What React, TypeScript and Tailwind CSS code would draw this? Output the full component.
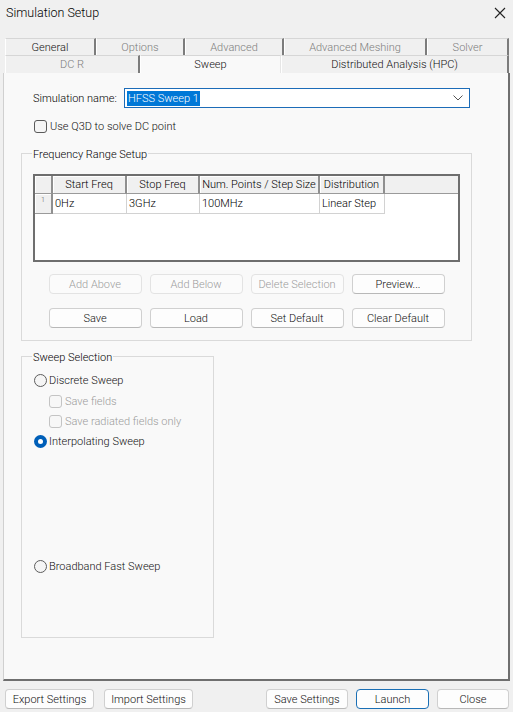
import React from "react";

type TabProps = { label: string; cls: string; disabled?: boolean; selected?: boolean };

function Tab({ label, cls, disabled, selected }: TabProps) {
  return (
    <div
      className={
        "flex items-center justify-center whitespace-nowrap pt-[1px] border-t border-l border-t-[#d6d6d6] border-l-[#ffffff] " +
        (selected
          ? "bg-[#f9f9f9] border-r border-r-[#e6e6e6] "
          : "bg-[#f0f0f0] border-r-2 border-r-[#7c7c7c] ") +
        (disabled ? "text-[#7d7d7d] " : "text-[#111111] ") +
        cls
      }
    >
      {label}
    </div>
  );
}

type BtnProps = { label: string; cls: string; disabled?: boolean; primary?: boolean };

function Btn({ label, cls, disabled, primary }: BtnProps) {
  return (
    <div
      className={
        "flex items-center justify-center whitespace-nowrap pt-[1px] rounded-[4px] border h-[20px] " +
        (disabled
          ? "bg-[#fbfbfb] border-[#e3e3e3] text-[#9b9b9b] "
          : primary
          ? "bg-[#fdfdfd] border-[#1a6fb5] text-[#111111] "
          : "bg-[#fdfdfd] border-[#d0d0d0] border-b-[#b8b8b8] text-[#111111] ") +
        cls
      }
    >
      {label}
    </div>
  );
}

function Check({ label, disabled }: { label: string; disabled?: boolean }) {
  return (
    <div className="flex items-center gap-[3px]">
      <div
        className={
          "w-[13px] h-[13px] rounded-[3px] border " +
          (disabled ? "border-[#c4c4c4] bg-[#f7f7f7]" : "border-[#5a5a5a] bg-[#f5f5f5]")
        }
      />
      <span className={"whitespace-nowrap pt-[1px] " + (disabled ? "text-[#9b9b9b]" : "text-[#111111]")}>{label}</span>
    </div>
  );
}

function Radio({ label, checked }: { label: string; checked?: boolean }) {
  return (
    <div className="flex items-center gap-[2px]">
      {checked ? (
        <div className="w-[13px] h-[13px] rounded-full bg-[#005fb8] flex items-center justify-center">
          <div className="w-[5px] h-[5px] rounded-full bg-white" />
        </div>
      ) : (
        <div className="w-[13px] h-[13px] rounded-full border border-[#5d5d5d] bg-[#f5f5f5]" />
      )}
      <span className="whitespace-nowrap pt-[1px] text-[#111111]">{label}</span>
    </div>
  );
}

function HeadCell({ label, cls }: { label: string; cls: string }) {
  return (
    <div
      className={
        "flex items-center justify-center whitespace-nowrap bg-[#f0f0f0] border-r-2 border-r-[#8f8f8f] border-b border-b-[#9a9a9a] shadow-[inset_1px_1px_0_#ffffff] h-full " +
        cls
      }
    >
      {label}
    </div>
  );
}

function DataCell({ label, cls }: { label: string; cls: string }) {
  return (
    <div className={"flex items-center whitespace-nowrap pl-[2px] bg-white border-r border-b border-[#d2d2d2] h-full " + cls}>
      {label}
    </div>
  );
}

export default function App() {
  return (
    <div className="w-[513px] h-[712px] bg-[#f0f0f0] font-['Roboto',sans-serif] font-light text-[11px] leading-[14px] text-[#000000] overflow-hidden">
      {/* Title bar */}
      <div className="h-[38px] flex items-start justify-between pl-[6px] pr-[7px] pt-[4px]">
        <span className="text-[12.5px] leading-[17px]">Simulation Setup</span>
        <svg width="12" height="12" viewBox="0 0 12 12" className="mt-[3px]">
          <path d="M1 1 L11 11 M11 1 L1 11" stroke="#222" strokeWidth="1.1" fill="none" />
        </svg>
      </div>

      {/* Tabs */}
      <div className="flex pl-[5px] h-[17px]">
        <Tab label="General" cls="w-[91px]" />
        <Tab label="Options" cls="w-[89px]" disabled />
        <Tab label="Advanced" cls="w-[99px]" disabled />
        <Tab label="Advanced Meshing" cls="w-[143px]" disabled />
        <Tab label="Solver" cls="w-[82px]" disabled />
      </div>
      <div className="flex pl-[5px] h-[18px]">
        <Tab label="DC R" cls="w-[135px]" disabled />
        <Tab label="Sweep" cls="w-[141px]" selected />
        <Tab label="Distributed Analysis (HPC)" cls="w-[228px]" />
      </div>

      {/* Panel */}
      <div className="ml-[3px] w-[507px] h-[608px] bg-[#f9f9f9] border-l border-l-[#d0d0d0] border-r-2 border-r-[#6f6f6f] border-b-2 border-b-[#6f6f6f] flex flex-col">
        {/* Simulation name */}
        <div className="flex items-center mt-[15px] pl-[29px] h-[20px]">
          <span className="w-[91px] pt-[1px]">Simulation name:</span>
          <div className="w-[346px] h-[20px] bg-white border border-[#1c6cb8] flex items-center justify-between pl-[2px] pr-[6px]">
            <span className="bg-[#0078d7] text-white px-[1px] leading-[14px] pt-[1px]">HFSS Sweep 1</span>
            <svg width="10" height="6" viewBox="0 0 10 6">
              <path d="M0.5 0.5 L5 5 L9.5 0.5" stroke="#555" strokeWidth="1" fill="none" />
            </svg>
          </div>
        </div>

        {/* Q3D checkbox */}
        <div className="mt-[12px] pl-[30px] h-[13px] flex items-center">
          <Check label="Use Q3D to solve DC point" />
        </div>

        {/* Frequency Range Setup */}
        <div className="mt-[20px] ml-[17px] w-[451px] h-[188px] border border-[#dadada] flex flex-col">
          <span className="-mt-[7px] ml-[10px] px-[1px] w-fit bg-[#f9f9f9] leading-[16px]">Frequency Range Setup</span>
          <div className="mt-[11px] ml-[11px] w-[427px] h-[88px] border-2 border-[#6e6e6e] bg-white flex flex-col">
            <div className="flex h-[18px]">
              <HeadCell label="" cls="w-[18px]" />
              <HeadCell label="Start Freq" cls="w-[74px]" />
              <HeadCell label="Stop Freq" cls="w-[73px]" />
              <HeadCell label="Num. Points / Step Size" cls="w-[120px]" />
              <HeadCell label="Distribution" cls="w-[65px]" />
              <div className="flex-1 h-full bg-[#f0f0f0] border-b border-b-[#9a9a9a]" />
            </div>
            <div className="flex h-[20px]">
              <div className="w-[18px] h-full bg-[#f0f0f0] border-r-2 border-r-[#8f8f8f] border-b border-b-[#9a9a9a] shadow-[inset_1px_1px_0_#ffffff] flex justify-center pt-[2px] text-[7px] leading-[8px] text-[#555555]">
                1
              </div>
              <DataCell label="0Hz" cls="w-[74px]" />
              <DataCell label="3GHz" cls="w-[73px]" />
              <DataCell label="100MHz" cls="w-[120px]" />
              <DataCell label="Linear Step" cls="w-[65px]" />
            </div>
          </div>

          <div className="mt-[12px] flex justify-center gap-[8px]">
            <Btn label="Add Above" cls="w-[93px]" disabled />
            <Btn label="Add Below" cls="w-[93px]" disabled />
            <Btn label="Delete Selection" cls="w-[93px]" disabled />
            <Btn label="Preview..." cls="w-[93px]" />
          </div>
          <div className="mt-[14px] flex justify-center gap-[8px]">
            <Btn label="Save" cls="w-[93px]" />
            <Btn label="Load" cls="w-[93px]" />
            <Btn label="Set Default" cls="w-[93px]" />
            <Btn label="Clear Default" cls="w-[93px]" />
          </div>
        </div>

        {/* Sweep Selection */}
        <div className="mt-[15px] ml-[17px] w-[193px] h-[282px] border border-[#dadada] flex flex-col">
          <span className="-mt-[7px] ml-[10px] px-[1px] w-fit bg-[#f9f9f9] leading-[16px]">Sweep Selection</span>
          <div className="mt-[4px] pl-[12px] flex flex-col">
            <div className="h-[21px] flex items-center">
              <Radio label="Discrete Sweep" />
            </div>
            <div className="h-[20px] flex items-center pl-[15px]">
              <Check label="Save fields" disabled />
            </div>
            <div className="h-[20px] flex items-center pl-[15px]">
              <Check label="Save radiated fields only" disabled />
            </div>
            <div className="h-[20px] flex items-center">
              <Radio label="Interpolating Sweep" checked />
            </div>
            <div className="mt-[105px] h-[20px] flex items-center">
              <Radio label="Broadband Fast Sweep" />
            </div>
          </div>
        </div>
      </div>

      {/* Bottom buttons */}
      <div className="mt-[8px] flex pl-[5px]">
        <Btn label="Export Settings" cls="w-[89px]" />
        <Btn label="Import Settings" cls="w-[89px] ml-[10px]" />
        <Btn label="Save Settings" cls="w-[82px] ml-[73px]" />
        <Btn label="Launch" cls="w-[73px] ml-[8px]" primary />
        <Btn label="Close" cls="w-[72px] ml-[8px]" />
      </div>
    </div>
  );
}
